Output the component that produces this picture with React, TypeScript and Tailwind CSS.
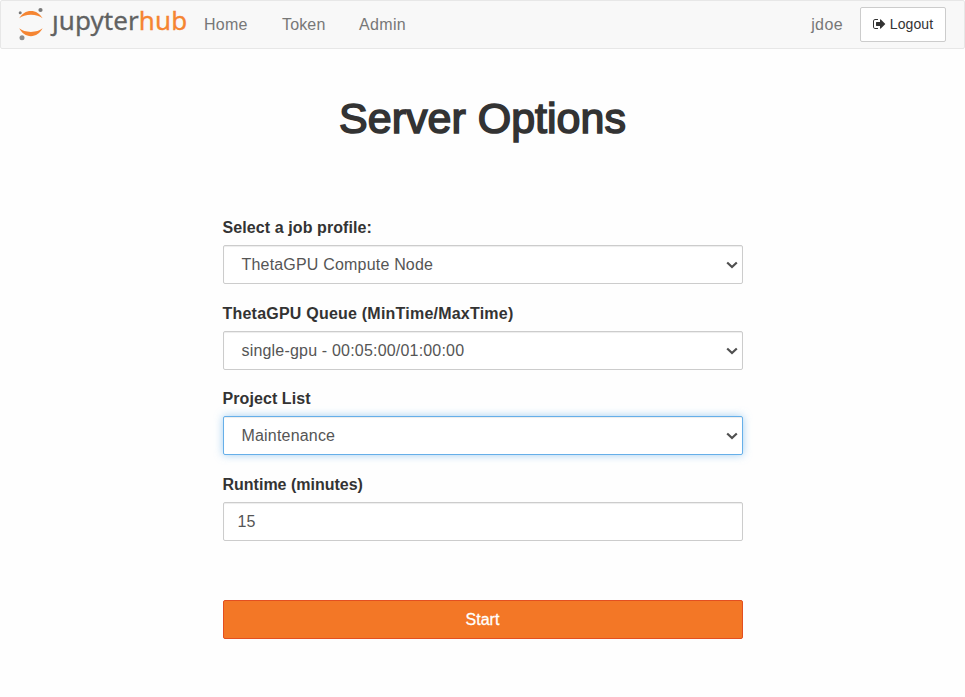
import React from "react";

function Logo() {
  return (
    <a className="ml-[17px] flex h-full w-[187px] items-start">
      <svg className="mt-[6px] shrink-0" width="28" height="35" viewBox="18 7 28 35">
        <path d="M19.2 18.2C21.8 13.5 26 10.9 30.9 10.9S40 13.5 42.6 18.2C39.8 16 35.7 14.8 30.9 14.8S22 16 19.2 18.2Z" fill="#f58532" />
        <path d="M19.2 28.3C21.8 33.2 26 36.2 30.9 36.2S40 33.2 42.6 28.3C39.8 30.6 35.7 31.9 30.9 31.9S22 30.6 19.2 28.3Z" fill="#f58532" />
        <circle cx="40.5" cy="10" r="2.1" fill="#7a7a7a" />
        <circle cx="20.2" cy="12.7" r="1.5" fill="#7a7a7a" />
        <circle cx="22" cy="37.8" r="2.5" fill="#8c8c8c" />
      </svg>
      <span className="ml-[6px] mt-px font-['Noto_Sans',sans-serif] text-[26px] leading-[36px] tracking-[0.08px] whitespace-nowrap text-[#616262] [-webkit-text-stroke:0.3px]">
        ȷupyter<span className="text-[#f58532]">hub</span>
      </span>
    </a>
  );
}

function SignOutIcon() {
  return (
    <svg width="13" height="14" viewBox="0 0 1664 1792" fill="currentColor">
      <path d="M640 1440q0 4 1 20t.5 26.5-3 23.5-10 19.5-20.5 6.5h-320q-119 0-203.5-84.5t-84.5-203.5v-704q0-119 84.5-203.5t203.5-84.5h320q13 0 22.5 9.5t9.5 22.5q0 4 1 20t.5 26.5-3 23.5-10 19.5-20.5 6.5h-320q-66 0-113 47t-47 113v704q0 66 47 113t113 47h312l11.5 1 11.5 3 8 5.5 7 9 2 13.5zm928-544q0 26-19 45l-544 544q-19 19-45 19t-45-19-19-45v-288h-448q-26 0-45-19t-19-45v-384q0-26 19-45t45-19h448v-288q0-26 19-45t45-19 45 19l544 544q19 19 19 45z" />
    </svg>
  );
}

function SelectBox({ value, focused = false }: { value: string; focused?: boolean }) {
  return (
    <div
      className={
        "mt-[7px] flex h-[39px] items-center justify-between rounded-[2px] border bg-white pl-[18px] pr-1 " +
        (focused
          ? "border-[#66afe9] shadow-[inset_0_1px_1px_rgba(0,0,0,0.075),0_0_9px_rgba(102,175,233,0.6)]"
          : "border-[#ccc] shadow-[inset_0_1px_1px_rgba(0,0,0,0.075)]")
      }
    >
      <span className="whitespace-nowrap tracking-[0.19px] text-[#555]">{value}</span>
      <svg width="12" height="8" viewBox="0 0 12 8" fill="none" stroke="#505050" strokeWidth="2.2">
        <path d="M1.2 1.5 6 6l4.8-4.5" />
      </svg>
    </div>
  );
}

export default function App() {
  return (
    <div className="h-[697px] w-full overflow-hidden bg-[#fefefe] font-['Liberation_Sans',Arial,sans-serif] text-[16px] leading-[22px] text-[#333]">
      <nav className="flex h-[49px] items-center rounded-[2px] border border-[#e7e7e7] bg-[#f8f8f8] text-[#777]">
        <Logo />
        <span className="-ml-px w-[78px] tracking-[0.25px]">Home</span>
        <span className="w-[77px] tracking-[0.15px]">Token</span>
        <span className="tracking-[0.35px]">Admin</span>
        <span className="ml-auto mr-[17px] tracking-[0.4px]">jdoe</span>
        <button className="mr-[18px] flex h-[35px] w-[86px] items-center justify-center gap-[4px] rounded-[2px] border border-[#ccc] bg-white pb-px text-[14px] text-[#333]">
          <SignOutIcon />
          <span className="tracking-[0.1px]">Logout</span>
        </button>
      </nav>
      <h1 className="mt-[44px] text-center text-[43px] font-normal leading-[50px] [-webkit-text-stroke:1.6px]">Server Options</h1>
      <form className="mx-auto mt-[75px] flex w-[520px] flex-col">
        <label className="h-[20px] font-bold leading-[20px] tracking-[0.09px]">Select a job profile:</label>
        <SelectBox value="ThetaGPU Compute Node" />
        <label className="mt-[20px] h-[20px] font-bold leading-[20px] tracking-[0.22px]">ThetaGPU Queue (MinTime/MaxTime)</label>
        <SelectBox value="single-gpu - 00:05:00/01:00:00" />
        <label className="mt-[19px] h-[20px] font-bold leading-[20px] tracking-[0.08px]">Project List</label>
        <SelectBox value="Maintenance" focused />
        <label className="mt-[20px] h-[20px] font-bold leading-[20px]">Runtime (minutes)</label>
        <div className="mt-[7px] flex h-[39px] items-center rounded-[2px] border border-[#ccc] bg-white pl-[14px] text-[#555] shadow-[inset_0_1px_1px_rgba(0,0,0,0.075)]">15</div>
        <button type="button" className="mt-[59px] h-[39px] rounded-[2px] border border-[#e34f21] bg-[#f37726] text-white [-webkit-text-stroke:0.3px]">Start</button>
      </form>
    </div>
  );
}
